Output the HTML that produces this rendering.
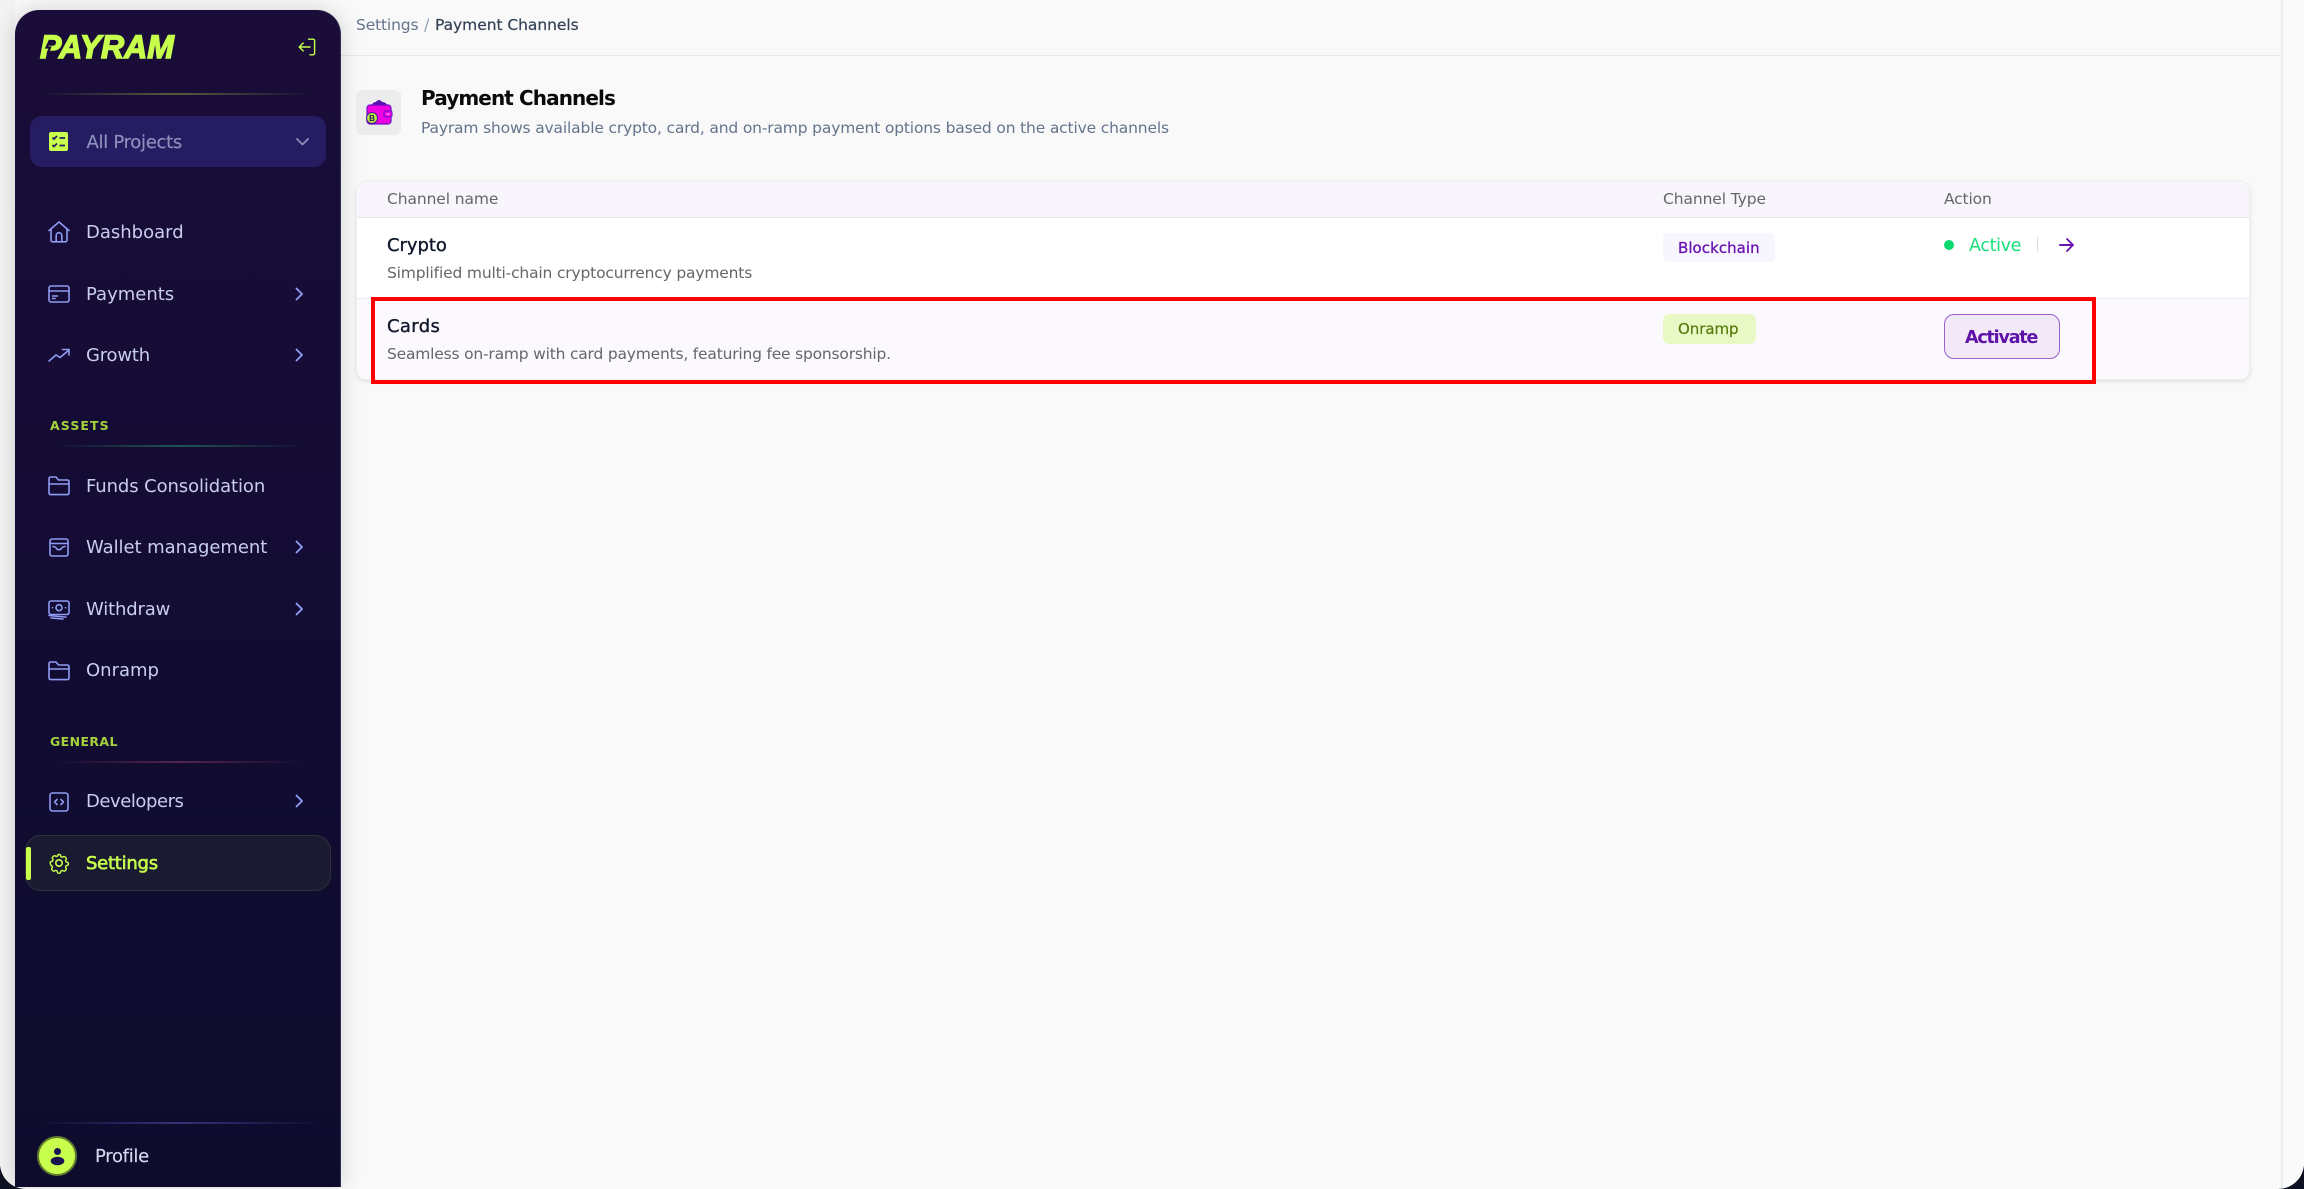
<!DOCTYPE html>
<html><head><meta charset="utf-8">
<style>
html,body{margin:0;padding:0;width:2304px;height:1189px;overflow:hidden;background:#0c1020}
#page{position:absolute;left:0;top:0;width:2304px;height:1189px;background:#f9f9f9;border-radius:0 0 26px 26px;overflow:hidden}
.a{position:absolute}
.t{position:absolute;white-space:nowrap;height:40px;line-height:40px;margin-top:1px;font-family:"DejaVu Sans","Liberation Sans",sans-serif}
#side{position:absolute;left:15px;top:10px;width:326px;height:1177px;border-radius:24px 24px 0 0;background:linear-gradient(180deg,#1a0d39 0%,#130c33 50%,#0e0c2d 100%);box-shadow:0 0 22px rgba(0,0,0,.16);border-right:1px solid #33305a;box-sizing:border-box}
.nav{font-size:18px;color:#c9cdf0}
.sec{font-size:12.5px;font-weight:bold;color:#a5d23c}
svg{position:absolute;overflow:visible}
.ic{fill:none;stroke:#8f9cf2;stroke-width:1.6;stroke-linecap:round;stroke-linejoin:round}
.div{position:absolute;height:2px}
.hd{font-size:15.5px;color:#666}
.nm{font-size:18px;color:#0f172a;-webkit-text-stroke:.35px #0f172a}
.sb{font-size:15.5px;color:#666}
</style></head><body>
<div id="page">
<!-- left gutter -->
<div class="a" style="left:0;top:0;width:15px;height:1189px;background:#f3f3f3"></div>
<!-- header line -->
<div class="a" style="left:341px;top:55px;width:1940px;height:1px;background:#e9e9e9"></div>
<!-- right line -->
<div class="a" style="left:2281px;top:0;width:2px;height:1189px;background:#ececec"></div>
<div class="a" style="left:2283px;top:0;width:21px;height:1189px;background:#fafafa"></div>

<div id="side"></div>
<!-- logo -->
<div class="t" style="margin-top:0;left:40px;top:27px;font-family:'Liberation Sans',sans-serif;font-weight:bold;font-style:italic;font-size:32px;letter-spacing:0;color:#c8ff4d;-webkit-text-stroke:1.4px #c8ff4d">PAYRAM</div>
<svg style="left:41px;top:35px" width="22" height="24" viewBox="0 0 22 24"><path d="M9 5l-3.5 7.5H9L6.5 19" fill="none" stroke="#1a0d39" stroke-width="2.2"/></svg>
<!-- logout icon -->
<svg style="left:298px;top:38px" width="18" height="18" viewBox="0 0 18 18" fill="none" stroke="#c8ff4d" stroke-width="1.4" stroke-linecap="round" stroke-linejoin="round"><path d="M10.5 1.2H15a1.6 1.6 0 0 1 1.6 1.6v12.4a1.6 1.6 0 0 1-1.6 1.6h-3"/><path d="M12 9H1.2M5.2 5L1.2 9l4 4"/></svg>
<div class="div" style="left:40px;top:93px;width:272px;background:linear-gradient(90deg,transparent,#5a5a3a 50%,transparent)"></div>

<!-- All projects -->
<div class="a" style="left:30px;top:116px;width:296px;height:51px;border-radius:12px;background:#251c62"></div>
<svg style="left:49px;top:132px" width="20" height="20" viewBox="0 0 20 20"><rect width="19" height="19" rx="2" fill="#c8ff4d"/><path d="M3.5 5.5l1.5 1.5 3-3M3.5 13l1.5 1.5 3-3M10.5 6h5.5M10.5 13.500h5.500" fill="none" stroke="#251c62" stroke-width="1.7"/></svg>
<div class="t" style="left:86.500px;top:122px;font-size:18px;color:#8d90bb;letter-spacing:-.3px;-webkit-text-stroke:.2px #8d90bb">All Projects</div>
<svg style="left:296px;top:138px" width="13" height="8" viewBox="0 0 13 8"><path d="M1 1l5.500 5.500L12 1" fill="none" stroke="#8d90bb" stroke-width="1.800" stroke-linecap="round" stroke-linejoin="round"/></svg>

<!-- Nav -->
<svg class="ic" style="left:48px;top:221px" width="22" height="22" viewBox="0 0 22 22"><path d="M1 9.500L11 1l10 8.500"/><path d="M3 8v11.200a1.600 1.600 0 0 0 1.600 1.600h12.800a1.600 1.600 0 0 0 1.600-1.600V8"/><path d="M8.200 20.800V14.500a2.800 2.800 0 0 1 5.600 0v6.300"/></svg>
<div class="t" style="left:86px;top:212px" ><span class="nav">Dashboard</span></div>

<svg class="ic" style="left:48px;top:285px" width="22" height="18" viewBox="0 0 22 18"><rect x="1" y="1" width="20" height="16" rx="2"/><path d="M1 6h20"/><path d="M4.500 11h5M4.500 13.500h2.500"/></svg>
<div class="t" style="left:86px;top:274px"><span class="nav">Payments</span></div>
<svg class="ic" style="left:295px;top:287px" width="9" height="14" viewBox="0 0 9 14"><path d="M1.500 1.500L7 7l-5.500 5.500" stroke-width="1.900"/></svg>

<svg class="ic" style="left:48px;top:348px" width="22" height="14" viewBox="0 0 22 14"><path d="M1 13l7-6 4 2.500L21 2"/><path d="M14.500 1.500H21V7"/></svg>
<div class="t" style="left:86px;top:335px"><span class="nav" style="letter-spacing:-.2px">Growth</span></div>
<svg class="ic" style="left:295px;top:348px" width="9" height="14" viewBox="0 0 9 14"><path d="M1.500 1.500L7 7l-5.500 5.500" stroke-width="1.900"/></svg>

<div class="t sec" style="left:50px;top:405px;letter-spacing:1.1px">ASSETS</div>
<div class="div" style="left:55px;top:445px;width:250px;background:linear-gradient(90deg,transparent,#1f5650 50%,transparent)"></div>

<svg class="ic" style="left:48px;top:476px" width="22" height="20" viewBox="0 0 22 20"><path d="M1 17V2.600A1.600 1.600 0 0 1 2.600 1h5.400l2.500 3h8.900A1.600 1.600 0 0 1 21 5.600V17a1.600 1.600 0 0 1-1.600 1.600H2.600A1.600 1.600 0 0 1 1 17z"/><path d="M1 8h20"/></svg>
<div class="t" style="left:86px;top:466px"><span class="nav" style="letter-spacing:-.1px">Funds Consolidation</span></div>

<svg class="ic" style="left:49px;top:538px" width="20" height="19" viewBox="0 0 20 19"><rect x="1" y="1" width="18" height="17" rx="2"/><path d="M1 5.500h18"/><path d="M4 8.500c2 0 3 1 4 2.500 1 1 3 1 4 0 1-1.500 2-2.500 4-2.500"/></svg>
<div class="t" style="left:86px;top:527px"><span class="nav" style="letter-spacing:-.05px">Wallet management</span></div>
<svg class="ic" style="left:295px;top:540px" width="9" height="14" viewBox="0 0 9 14"><path d="M1.500 1.500L7 7l-5.500 5.500" stroke-width="1.900"/></svg>

<svg class="ic" style="left:48px;top:600px" width="22" height="20" viewBox="0 0 22 20"><rect x="1" y="1" width="20" height="13.500" rx="2"/><circle cx="11" cy="7.700" r="3"/><path d="M4.500 7.700h.1M17.500 7.700h.1"/><path d="M1 15.500l15 1.500h2M3 18l12 1"/></svg>
<div class="t" style="left:86px;top:589px"><span class="nav" style="letter-spacing:-.15px">Withdraw</span></div>
<svg class="ic" style="left:295px;top:602px" width="9" height="14" viewBox="0 0 9 14"><path d="M1.500 1.500L7 7l-5.500 5.500" stroke-width="1.900"/></svg>

<svg class="ic" style="left:48px;top:661px" width="22" height="20" viewBox="0 0 22 20"><path d="M1 17V2.600A1.600 1.600 0 0 1 2.600 1h5.400l2.500 3h8.900A1.600 1.600 0 0 1 21 5.600V17a1.600 1.600 0 0 1-1.600 1.600H2.600A1.600 1.600 0 0 1 1 17z"/><path d="M1 8h20"/></svg>
<div class="t" style="left:86px;top:650px"><span class="nav">Onramp</span></div>

<div class="t sec" style="left:50px;top:721px;letter-spacing:.4px">GENERAL</div>
<div class="div" style="left:55px;top:761px;width:250px;background:linear-gradient(90deg,transparent,#55244f 50%,transparent)"></div>

<svg class="ic" style="left:49px;top:792px" width="20" height="20" viewBox="0 0 20 20"><rect x="1" y="1" width="18" height="18" rx="2.500"/><path d="M8 7.500L5.500 10 8 12.500M12 7.500l2.500 2.500-2.500 2.500"/></svg>
<div class="t" style="left:86px;top:781px"><span class="nav" style="letter-spacing:-.45px">Developers</span></div>
<svg class="ic" style="left:295px;top:794px" width="9" height="14" viewBox="0 0 9 14"><path d="M1.500 1.500L7 7l-5.500 5.500" stroke-width="1.900"/></svg>

<!-- Settings -->
<div class="a" style="left:25px;top:835px;width:306px;height:56px;box-sizing:border-box;border-radius:16px;background:#1a1b30;border:1px solid #30323b"></div>
<div class="a" style="left:26px;top:847px;width:5px;height:33px;border-radius:2px;background:#c8ff4d"></div>
<svg style="left:48px;top:852px" width="22" height="22" viewBox="0 0 24 24" fill="none" stroke="#c8ff4d" stroke-width="1.700" stroke-linecap="round" stroke-linejoin="round"><circle cx="12" cy="12" r="3.500"/><path d="M12 1.500c1 0 1.800.8 2 1.800l.2 1 1.900.8.900-.6c.8-.5 1.900-.4 2.600.3l.6.600c.7.700.8 1.800.3 2.600l-.6.900.8 1.900 1 .2c1 .2 1.800 1 1.800 2s-.8 1.800-1.800 2l-1 .2-.8 1.900.6.900c.5.800.4 1.900-.3 2.600l-.6.6c-.7.7-1.800.8-2.600.3l-.9-.6-1.900.8-.2 1c-.2 1-1 1.800-2 1.800s-1.800-.8-2-1.800l-.2-1-1.900-.8-.9.6c-.8.5-1.900.4-2.600-.3l-.6-.6c-.7-.7-.8-1.800-.3-2.600l.6-.9-.8-1.900-1-.2C2.100 13.800 1.300 13 1.300 12s.8-1.800 1.800-2l1-.2.800-1.900-.6-.9c-.5-.8-.4-1.900.3-2.600l.6-.6c.7-.7 1.800-.8 2.600-.3l.9.6 1.900-.8.2-1C10.200 2.300 11 1.500 12 1.500z" transform="translate(1.200 1.200) scale(.9)"/></svg>
<div class="t" style="left:86px;top:843px;font-size:18px;color:#c8ff4d;letter-spacing:-.25px;-webkit-text-stroke:.6px #c8ff4d">Settings</div>

<!-- Profile -->
<div class="div" style="left:35px;top:1122px;width:290px;background:linear-gradient(90deg,transparent,#3d2f78 50%,transparent)"></div>
<div class="a" style="left:37px;top:1136px;width:40px;height:40px;box-sizing:border-box;border-radius:50%;background:#c8ff4d;border:2px solid #5f7a2e"></div>
<svg style="left:50px;top:1147px" width="15" height="19" viewBox="0 0 15 19"><circle cx="7.500" cy="4.500" r="3.500" fill="#1a1450"/><ellipse cx="7.500" cy="14" rx="6.800" ry="4.300" fill="#1a1450"/></svg>
<div class="t" style="left:95px;top:1136px;font-size:18px;color:#d5d7ee;letter-spacing:-.3px;-webkit-text-stroke:.15px #d5d7ee">Profile</div>

<!-- Breadcrumb -->
<div class="t" style="left:356px;top:4px;font-size:15.5px;color:#64748b;letter-spacing:-.15px">Settings</div>
<div class="t" style="left:424px;top:4px;font-size:16px;color:#94a3b8">/</div>
<div class="t" style="left:435px;top:4px;font-size:15.5px;color:#334155;letter-spacing:-.05px;-webkit-text-stroke:.2px #334155">Payment Channels</div>

<!-- Title -->
<div class="a" style="left:356px;top:90px;width:45px;height:45px;border-radius:6px;background:#ececec"></div>
<svg style="left:365px;top:99px" width="30" height="28" viewBox="0 0 30 28">
<path d="M7 6c1-3 3-3 4-3 1-2.500 5-2.500 6 0 2 0 4 .500 5 3z" fill="#5a12b0"/>
<rect x="2" y="6" width="24" height="19" rx="3" fill="#f000e0" stroke="#6a10c8" stroke-width="1.200"/>
<rect x="19" y="12" width="8" height="6" rx="1.500" fill="#f000e0" stroke="#6a10c8" stroke-width="1"/>
<rect x="21.500" y="14.500" width="3" height="1.200" fill="#ffb0ff"/>
<circle cx="7" cy="19" r="5.500" fill="#b8e83c" stroke="#4a10a0" stroke-width="1"/>
<text x="7" y="22" text-anchor="middle" font-family="Liberation Sans,sans-serif" font-size="8" font-weight="bold" fill="#2a1060">B</text>
</svg>
<div class="t" style="margin-top:0;left:421px;top:78px;font-size:20px;font-weight:bold;color:#0a0a0a;letter-spacing:-.9px">Payment Channels</div>
<div class="t" style="margin-top:0;left:421px;top:108px;font-size:15.500px;color:#64748b;letter-spacing:-.16px">Payram shows available crypto, card, and on-ramp payment options based on the active channels</div>

<!-- Table -->
<div class="a" style="left:356px;top:181px;width:1894px;height:199px;box-sizing:border-box;border-radius:10px;background:#fff;border:1px solid #eeeef0;box-shadow:0 2px 4px rgba(0,0,0,.10);overflow:hidden">
  <div class="a" style="left:0;top:0;width:100%;height:35px;background:#f8f6fc;border-bottom:1px solid #e6e5ea"></div>
  <div class="a" style="left:0;top:116px;width:100%;height:82px;background:#fbf9fe;border-top:1px solid #eeeef0"></div>
</div>
<div class="t hd" style="left:387px;top:178px;letter-spacing:-.1px">Channel name</div>
<div class="t hd" style="left:1663px;top:178px;letter-spacing:-.1px">Channel Type</div>
<div class="t hd" style="left:1944px;top:178px;letter-spacing:-.15px">Action</div>

<div class="t nm" style="left:387px;top:225px;letter-spacing:-.05px">Crypto</div>
<div class="t sb" style="left:387px;top:252px;letter-spacing:-.17px">Simplified multi-chain cryptocurrency payments</div>
<div class="t nm" style="left:387px;top:306px;letter-spacing:.35px">Cards</div>
<div class="t sb" style="left:387px;top:333px;letter-spacing:-.2px">Seamless on-ramp with card payments, featuring fee sponsorship.</div>

<div class="a" style="left:1663px;top:233px;width:112px;height:29px;border-radius:6px;background:#f7f5fd"></div>
<div class="t" style="left:1678px;top:227px;font-size:15px;color:#6a14b0;letter-spacing:.05px;-webkit-text-stroke:.3px #6a14b0">Blockchain</div>
<div class="a" style="left:1663px;top:314px;width:93px;height:30px;border-radius:6px;background:#e9f9c6"></div>
<div class="t" style="left:1678px;top:308px;font-size:15px;color:#557a0a;letter-spacing:-.05px;-webkit-text-stroke:.2px #557a0a">Onramp</div>

<div class="a" style="left:1944px;top:240px;width:10px;height:10px;border-radius:50%;background:#0ad96f"></div>
<div class="t" style="left:1969px;top:225px;font-size:17.500px;color:#14e07a;letter-spacing:-.35px">Active</div>
<div class="a" style="left:2037px;top:237px;width:1px;height:15px;background:#dcdcdc"></div>
<svg style="left:2059px;top:238px" width="15" height="14" viewBox="0 0 15 14" fill="none" stroke="#6a14b0" stroke-width="1.900" stroke-linecap="round" stroke-linejoin="round"><path d="M1 7h13M8 1l6 6-6 6"/></svg>

<div class="a" style="left:1944px;top:314px;width:116px;height:45px;box-sizing:border-box;border-radius:10px;background:#f2e9f8;border:1.500px solid #9b5fce"></div>
<div class="t" style="left:1965px;top:317px;font-size:17.500px;font-weight:bold;color:#5e12a8;letter-spacing:-1.200px">Activate</div>

<!-- red highlight -->
<div class="a" style="left:371px;top:297px;width:1725px;height:87px;box-sizing:border-box;border:4px solid #ff0000"></div>
</div>
</body></html>
